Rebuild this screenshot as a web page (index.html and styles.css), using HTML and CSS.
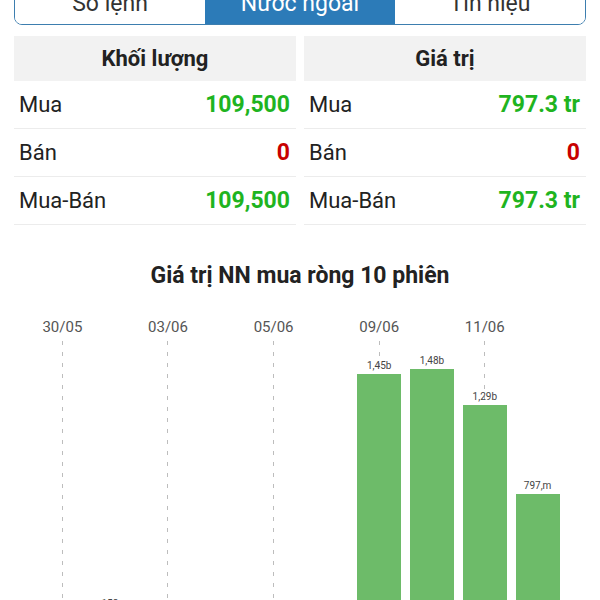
FILE: index.html
```html
<!doctype html>
<html lang="vi">
  <head>
    <meta charset="UTF-8" />
    <meta name="viewport" content="width=device-width, initial-scale=1.0" />
    <title>Nước ngoài</title>
    <link rel="stylesheet" href="styles.css">
  </head>
  <body>
    <div class="page">
      <div class="tabs">
        <div class="tab">Số lệnh</div>
        <div class="tab active">Nước ngoài</div>
        <div class="tab">Tín hiệu</div>
      </div>

      <div class="stats">
        <div class="panel">
          <div class="panel-head">Khối lượng</div>
          <div class="row"><span>Mua</span><span class="val up">109,500</span></div>
          <div class="row"><span>Bán</span><span class="val down">0</span></div>
          <div class="row"><span>Mua-Bán</span><span class="val up">109,500</span></div>
        </div>
        <div class="panel">
          <div class="panel-head">Giá trị</div>
          <div class="row"><span>Mua</span><span class="val up">797.3 tr</span></div>
          <div class="row"><span>Bán</span><span class="val down">0</span></div>
          <div class="row"><span>Mua-Bán</span><span class="val up">797.3 tr</span></div>
        </div>
      </div>

      <h3 class="chart-title">Giá trị NN mua ròng 10 phiên</h3>

      <div class="chart">
        <div class="col dated"><div class="date">30/05</div><div class="plot"></div></div>
        <div class="col"><div class="date"></div><div class="plot"><div class="bar-label">152,m</div><div class="bar" style="height: 28px"></div></div></div>
        <div class="col dated"><div class="date">03/06</div><div class="plot"></div></div>
        <div class="col"><div class="date"></div><div class="plot"></div></div>
        <div class="col dated"><div class="date">05/06</div><div class="plot"></div></div>
        <div class="col"><div class="date"></div><div class="plot"></div></div>
        <div class="col dated"><div class="date">09/06</div><div class="plot"><div class="bar-label">1,45b</div><div class="bar" style="height: 266px"></div></div></div>
        <div class="col"><div class="date"></div><div class="plot"><div class="bar-label">1,48b</div><div class="bar" style="height: 271px"></div></div></div>
        <div class="col dated"><div class="date">11/06</div><div class="plot"><div class="bar-label">1,29b</div><div class="bar" style="height: 235px"></div></div></div>
        <div class="col"><div class="date"></div><div class="plot"><div class="bar-label">797,m</div><div class="bar" style="height: 146px"></div></div></div>
      </div>
    </div>
  </body>
</html>
```

FILE: styles.css
```css
body {
  margin: 0;
  font-family: Roboto, "Noto Sans", sans-serif;
  color: #222;
  background: #fff;
}
.page {
  padding: 0 14px;
}
.tabs {
  display: flex;
  height: 42px;
  margin-top: -19px;
  border: 1px solid #3d7eaf;
  border-radius: 0 0 8px 8px;
  overflow: hidden;
}
.tab {
  flex: 1;
  display: flex;
  align-items: center;
  justify-content: center;
  font-size: 23px;
  color: #333;
  background: #fff;
}
.tab.active {
  background: #2c7bb8;
  color: #fff;
}
.stats {
  display: grid;
  grid-template-columns: 1fr 1fr;
  gap: 8px;
  margin-top: 11px;
}
.panel-head {
  height: 45px;
  display: flex;
  align-items: center;
  justify-content: center;
  background: #f2f2f2;
  font-size: 22px;
  font-weight: bold;
}
.row {
  height: 47px;
  display: flex;
  align-items: center;
  justify-content: space-between;
  padding: 0 6px 0 5px;
  border-bottom: 1px solid #ececec;
  font-size: 22px;
}
.val {
  font-size: 23px;
  font-weight: bold;
}
.up {
  color: #1fb41f;
}
.down {
  color: #c80000;
}
.chart-title {
  margin: 37px 0 0;
  line-height: 28px;
  font-size: 23px;
  font-weight: bold;
  text-align: center;
}
.chart {
  display: flex;
  margin: 29px 22px 0;
  height: 321px;
}
.col {
  flex: 1;
  display: flex;
  flex-direction: column;
}
.date {
  height: 16px;
  line-height: 16px;
  margin-bottom: 6px;
  font-size: 15px;
  color: #555;
  text-align: center;
}
.plot {
  flex: 1;
  display: flex;
  flex-direction: column;
  justify-content: flex-end;
  align-items: center;
}
.col.dated .plot {
  background: linear-gradient(#bdbdbd 4px, transparent 4px) center top / 1px 11px repeat-y;
}
.bar-label {
  font-size: 10px;
  color: #444;
  margin-bottom: 3px;
}
.bar {
  width: 44px;
  background: #6dbb69;
}
```
